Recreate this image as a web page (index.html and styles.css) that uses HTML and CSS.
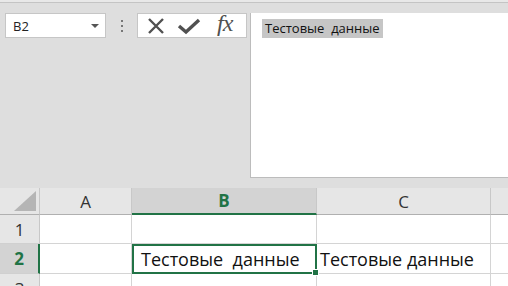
FILE: index.html
```html
<!DOCTYPE html>
<html lang="en">
<head>
    <meta charset="UTF-8">
    <meta name="viewport" content="width=device-width, initial-scale=1.0">
    <title>Sheet</title>
    <link rel="stylesheet" href="styles.css">
</head>
<body>
    <div class="topline"></div>
    <div class="bar">
        <div class="name-box">
            <span>B2</span>
            <span class="arrow"></span>
        </div>
        <div class="dots"><i></i><i></i><i></i></div>
        <div class="fx-box">
            <svg class="icon" width="20" height="20" viewBox="0 0 20 20">
                <path d="M3 3 L17 17 M17 3 L3 17" stroke="#505050" stroke-width="2.4" fill="none"/>
            </svg>
            <svg class="icon" width="24" height="20" viewBox="0 0 24 20">
                <path d="M2 10 L9 16 L22 4" stroke="#505050" stroke-width="3.4" fill="none"/>
            </svg>
            <span class="fx">fx</span>
        </div>
        <div class="formula">
            <span class="formula-text">Тестовые&nbsp; данные</span>
        </div>
    </div>
    <div class="grid">
        <div class="hdr corner"><span class="tri"></span></div>
        <div class="hdr">A</div>
        <div class="hdr active-col">B</div>
        <div class="hdr">C</div>
        <div class="hdr last"></div>

        <div class="rowhdr">1</div>
        <div class="cell"></div>
        <div class="cell"></div>
        <div class="cell"></div>
        <div class="cell last"></div>

        <div class="rowhdr active-row">2</div>
        <div class="cell"></div>
        <div class="cell selected">Тестовые&nbsp; данные<span class="handle"></span></div>
        <div class="cell">Тестовые данные</div>
        <div class="cell last"></div>

        <div class="rowhdr">3</div>
        <div class="cell"></div>
        <div class="cell"></div>
        <div class="cell"></div>
        <div class="cell last"></div>
    </div>
</body>
</html>
```

FILE: styles.css
```css
body {
    margin: 0;
    background-color: #dedede;
    font-family: "Open Sans", "Liberation Sans", sans-serif;
    overflow: hidden;
    height: 286px;
}

.topline {
    height: 2px;
    background-color: #e8e8e8;
    border-bottom: 1px solid #c4c4c4;
}

.bar {
    display: flex;
    align-items: flex-start;
    padding-top: 10px;
    height: 165px;
}

.name-box {
    box-sizing: border-box;
    width: 101px;
    height: 25px;
    margin-left: 5px;
    background-color: #fff;
    border: 1px solid #c6c6c6;
    display: flex;
    align-items: center;
    justify-content: space-between;
    padding: 0 6px 0 7px;
    font-size: 13px;
    color: #222;
}

.arrow {
    width: 0;
    height: 0;
    border-left: 4px solid transparent;
    border-right: 4px solid transparent;
    border-top: 4px solid #555;
}

.dots {
    width: 31px;
    height: 25px;
    display: flex;
    flex-direction: column;
    align-items: center;
    justify-content: center;
    gap: 3px;
}

.dots i {
    display: block;
    width: 2px;
    height: 2px;
    background-color: #777;
}

.fx-box {
    box-sizing: border-box;
    width: 110px;
    height: 25px;
    background-color: #fff;
    border: 1px solid #c6c6c6;
    display: flex;
    align-items: center;
    padding-left: 8px;
    gap: 11px;
}

.fx {
    font-family: "Liberation Serif", serif;
    font-style: italic;
    font-size: 24px;
    color: #505050;
    margin-left: 5px;
    margin-top: -4px;
    letter-spacing: -1px;
}

.formula {
    box-sizing: border-box;
    flex: 1;
    height: 165px;
    margin-left: 3px;
    background-color: #fff;
    border-left: 1px solid #bcbcbc;
    border-bottom: 1px solid #bcbcbc;
    padding: 3px 0 0 11px;
}

.formula-text {
    display: inline-block;
    background-color: #c6c6c6;
    font-size: 13px;
    color: #111;
    padding: 1px 3px 1px 3px;
    line-height: 17px;
}

.grid {
    display: grid;
    grid-template-columns: 40px 92px 185px 174px 17px;
    grid-template-rows: 27px 29px 30px 30px;
    margin-top: 10px;
    background-color: #fff;
}

.grid > div {
    box-sizing: border-box;
}

.hdr {
    background-color: #e6e6e6;
    border-right: 1px solid #c8c8c8;
    border-bottom: 1px solid #b0b0b0;
    display: flex;
    align-items: center;
    justify-content: center;
    font-size: 17px;
    color: #333;
}

.hdr.last {
    border-right: none;
}

.corner {
    position: relative;
    border-right: 1px solid #c8c8c8;
}

.tri {
    position: absolute;
    right: 3px;
    bottom: 3px;
    width: 0;
    height: 0;
    border-left: 22px solid transparent;
    border-bottom: 20px solid #b5b5b5;
}

.active-col {
    background-color: #d3d3d3;
    color: #217346;
    font-weight: bold;
    border-bottom: 2px solid #217346;
}

.rowhdr {
    background-color: #e6e6e6;
    border-right: 1px solid #c8c8c8;
    border-bottom: 1px solid #d0d0d0;
    display: flex;
    align-items: center;
    justify-content: center;
    font-size: 17px;
    color: #333;
}

.active-row {
    background-color: #d3d3d3;
    color: #217346;
    font-weight: bold;
    border-right: 2px solid #217346;
}

.cell {
    border-right: 1px solid #d4d4d4;
    border-bottom: 1px solid #d4d4d4;
    font-size: 18px;
    color: #111;
    display: flex;
    align-items: center;
    padding-left: 3px;
    white-space: nowrap;
}

.cell.last {
    border-right: none;
}

.selected {
    position: relative;
    border: 2px solid #217346;
    padding-left: 7px;
}

.handle {
    position: absolute;
    right: -4px;
    bottom: -4px;
    width: 5px;
    height: 5px;
    background-color: #217346;
    border: 1px solid #fff;
}
```
